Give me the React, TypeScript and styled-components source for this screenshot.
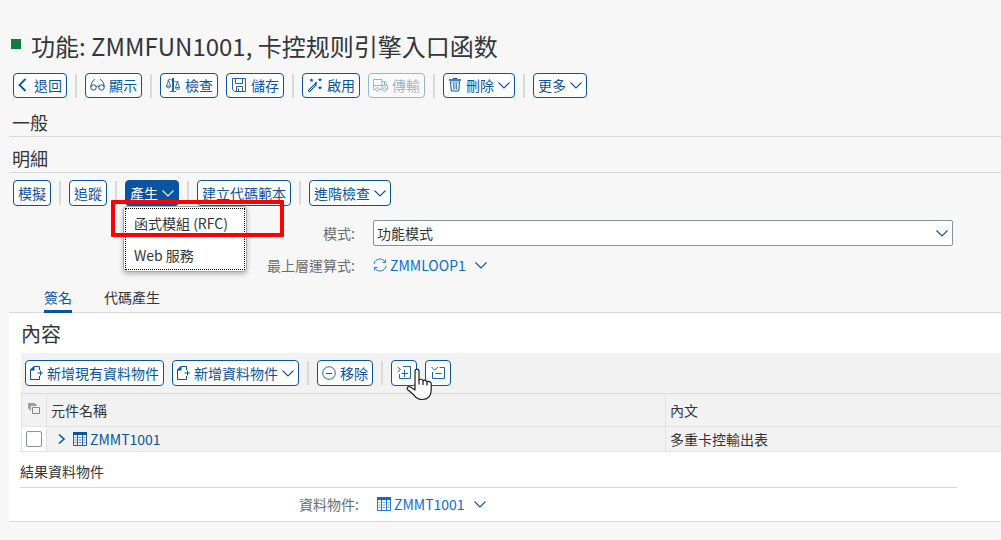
import React from "react";
import styled, { createGlobalStyle, css } from "styled-components";

const BLUE = "#0854a0";
const LINK = "#0a6ed1";
const TEXT = "#32363a";
const LABEL = "#6a6d70";
const LINE = "#d9d9d9";

const GlobalStyle = createGlobalStyle`
  * { box-sizing: border-box; }
  body {
    margin: 0;
    background: #f7f7f7;
    color: ${TEXT};
    font-family: "Noto Sans CJK TC", "Noto Sans CJK SC", sans-serif;
    font-size: 14px;
    line-height: 20px;
  }
  button, select, input { font: inherit; color: inherit; }
`;

const Page = styled.main`
  padding: 30px 0 18px 9px;
`;

const TitleRow = styled.header`
  display: flex;
  align-items: center;
  gap: 10px;
  padding-left: 2px;
  margin-bottom: 11px;
`;

const StatusMark = styled.span`
  width: 10px;
  height: 10px;
  margin-bottom: 4px;
  background: #107e3e;
`;

const Title = styled.h1`
  margin: 0;
  font-size: 24px;
  line-height: 32px;
  font-weight: 400;
`;

const Toolbar = styled.div<{ $shaded?: boolean }>`
  display: flex;
  align-items: center;
  gap: 8px;
  padding: ${(p) => (p.$shaded ? "7px 4px" : "0 4px")};
  background: ${(p) => (p.$shaded ? "#f2f2f2" : "transparent")};
`;

const Separator = styled.span`
  width: 2px;
  height: 24px;
  background: ${LINE};
`;

const Button = styled.button<{ $active?: boolean }>`
  display: inline-flex;
  align-items: center;
  gap: 4px;
  height: 26px;
  padding: 0 4px 1px;
  border: 1px solid ${BLUE};
  border-radius: 4px;
  background: ${(p) => (p.$active ? BLUE : "#fff")};
  color: ${(p) => (p.$active ? "#fff" : BLUE)};
  white-space: nowrap;
  line-height: 22px;
  svg { flex: none; }
  &:disabled { opacity: 0.4; }
`;

const IconButton = styled(Button)`
  width: 26px;
  justify-content: center;
`;

const MainToolbar = styled(Toolbar)`
  ${Button} { height: 25px; }
`;

const SectionTitle = styled.h2<{ $first?: boolean }>`
  margin: ${(p) => (p.$first ? "13px" : "10px")} 0 0;
  padding: 0 0 2px 3px;
  border-bottom: 1px solid ${LINE};
  font-size: 18px;
  line-height: 23px;
  font-weight: 400;
`;

const DetailTools = styled.div`
  margin: 7px 0 14px;
`;

const MenuAnchor = styled.div`
  position: relative;
  display: flex;
`;

const Menu = styled.div`
  position: absolute;
  top: 26px;
  left: -2px;
  z-index: 2;
  width: 124px;
  padding: 1px;
  background: #fff;
  border: 1px solid #a8a8a8;
  border-radius: 4px;
  box-shadow: 0 2px 5px rgba(0, 0, 0, 0.28);
`;

const MenuList = styled.ul`
  display: grid;
  gap: 4px;
  margin: 0;
  padding: 0;
  list-style: none;
  border: 1px dotted #000;
`;

const MenuItem = styled.button`
  display: block;
  width: 100%;
  height: 28px;
  padding: 0 8px;
  border: 0;
  background: none;
  text-align: left;
  white-space: nowrap;
`;

const Highlight = styled.div`
  position: absolute;
  top: 20px;
  left: -14px;
  z-index: 3;
  width: 173px;
  height: 37px;
  border: 4px solid #f00;
  border-radius: 1px;
  pointer-events: none;
`;

const FormRow = styled.div<{ $inset?: boolean }>`
  display: grid;
  grid-template-columns: ${(p) => (p.$inset ? "338px" : "346px")} minmax(0, 1fr);
  column-gap: 18px;
  align-items: center;
  min-height: 26px;
  padding-right: 48px;
`;

const Form = styled.div`
  display: grid;
  gap: 6px;
`;

const labelText = css`
  color: ${LABEL};
  text-align: right;
`;
const Label = styled.label`${labelText}`;
const LabelText = styled.span`${labelText}`;

const SelectWrap = styled.div`
  position: relative;
  display: flex;
  svg {
    position: absolute;
    right: 5px;
    top: 7px;
    pointer-events: none;
    color: ${BLUE};
  }
`;

const Select = styled.select`
  appearance: none;
  width: 100%;
  height: 26px;
  padding: 0 24px 1px 3px;
  border: 1px solid #89919a;
  border-radius: 2px;
  background: #fff;
`;

const ObjectField = styled.div`
  display: flex;
  align-items: center;
  gap: 3px;
  color: ${LINK};
`;

const Link = styled.a`
  display: inline-flex;
  align-items: center;
  gap: 3px;
  color: ${LINK};
  text-decoration: none;
`;

const PlainButton = styled.button`
  display: inline-flex;
  margin-left: 4px;
  padding: 0 2px;
  border: 0;
  background: none;
  color: ${BLUE};
`;

const Tabs = styled.div`
  display: flex;
  gap: 32px;
  margin-top: 6px;
  padding-left: 35px;
  border-bottom: 1px solid ${LINE};
`;

const Tab = styled.button<{ $selected?: boolean }>`
  height: 29px;
  margin-bottom: -1px;
  padding: 0;
  border: 0;
  border-bottom: 3px solid ${(p) => (p.$selected ? BLUE : "transparent")};
  background: none;
  color: ${(p) => (p.$selected ? BLUE : TEXT)};
`;

const Panel = styled.section`
  padding: 7px 0 4px 12px;
  background: #fff;
  border-bottom: 1px solid ${LINE};
`;

const PanelTitle = styled.h3`
  margin: 0 0 5px;
  font-size: 20px;
  line-height: 28px;
  font-weight: 400;
`;

const Table = styled.table`
  width: 100%;
  table-layout: fixed;
  border-collapse: collapse;
  background: #f2f2f2;
  th, td {
    padding: 0 4px;
    border: 1px solid #e2e2e2;
    text-align: left;
    font-weight: 400;
    white-space: nowrap;
  }
  th { height: 33px; border-top-color: ${LINE}; }
  td { height: 25px; }
  th:last-child, td:last-child { border-right: 0; }
`;

const SelectColumn = styled.col`
  width: 25px;
`;

const NameColumn = styled.col`
  width: 63.2%;
`;

const CheckCell = styled.td`
  background: #fff;
`;

const CornerIcon = styled.span`
  display: flex;
  justify-content: center;
  padding-bottom: 2px;
  color: #85888b;
`;

const Checkbox = styled.input`
  appearance: none;
  display: block;
  width: 16px;
  height: 16px;
  margin: 0;
  border: 1px solid #89919a;
  border-radius: 2px;
  background: #fff;
`;

const NameCell = styled.div`
  display: flex;
  align-items: center;
  gap: 3px;
  padding-left: 2px;
  color: ${BLUE};
`;

const RowLink = styled(Link)`
  color: ${BLUE};
`;

const Expander = styled.button`
  display: inline-flex;
  padding: 0 4px;
  border: 0;
  background: none;
  color: ${BLUE};
`;

const ResultTitle = styled.h4`
  margin: 0 44px 3px -1px;
  padding: 7px 0 4px;
  border-bottom: 1px solid ${LINE};
  font-size: 14px;
  line-height: 24px;
  font-weight: 400;
`;

const PointerAnchor = styled.span`
  position: relative;
  display: flex;
`;

const Pointer = styled.svg`
  position: absolute;
  left: 14px;
  top: 8px;
  z-index: 2;
  pointer-events: none;
`;

type IconProps = { w?: number; h?: number; children: React.ReactNode };
const Icon = ({ w = 16, h = 16, children }: IconProps) => (
  <svg width={w} height={h} viewBox={`0 0 ${w} ${h}`} fill="none" stroke="currentColor" strokeWidth="1" aria-hidden="true">
    {children}
  </svg>
);

const Chevron = () => (
  <Icon w={12} h={12}><path d="M0.5 3.5 6 9l5.500-5.500" strokeWidth="1.100" /></Icon>
);
const Back = () => (
  <Icon w={12}><path d="M7.500 2 1.500 8l6 6" strokeWidth="1.800" /></Icon>
);
const Glasses = () => (
  <Icon w={15}>
    <circle cx="3.500" cy="10.500" r="2.700" />
    <circle cx="11.500" cy="10.500" r="2.700" />
    <path d="M6.200 10c.5-1.200 2.100-1.200 2.600 0M.8 10C1 6.500 2.500 3 5 2.600M14.200 10C14 6.500 12.500 3 10 2.600" />
  </Icon>
);
const Scale = () => (
  <Icon>
    <path d="M8 1v13" strokeWidth="1.800" />
    <path d="M5 14.500h6M2.500 3.500c2-1.500 3-1 5.500 0M8 3.500c2 1 3.500 2 5.500 1M3.500 3.500 1.500 9h4zM12.500 4.500l-2 6h4z" strokeWidth=".8" />
    <path d="M1.500 9c0 2.500 4 2.500 4 0M10.500 10.500c0 2.500 4 2.500 4 0" />
  </Icon>
);
const Save = () => (
  <Icon>
    <path d="M1.500 1.500h13v13H3.500l-2-2zM4.500 1.500v5h7v-5M5.500 14.500v-5h6v5M7.500 11.500v3" strokeWidth=".9" />
  </Icon>
);
const Wand = () => (
  <Icon>
    <path d="m1.500 14.500 7.500-7.500" strokeWidth="2.600" />
    <path d="m2 14 6-6" stroke="#fff" strokeWidth=".9" />
    <g fill="currentColor" stroke="none">
      <path d="m4.500 1 .6 1.400 1.600.1-1.200 1 .4 1.600-1.400-.8-1.400.8.4-1.600-1.200-1 1.600-.1z" />
      <path d="m13 .5.6 1.400 1.600.1-1.200 1 .4 1.600-1.400-.8-1.400.8.4-1.600-1.200-1 1.600-.1z" />
      <path d="m13 8.500.6 1.400 1.600.1-1.200 1 .4 1.600-1.400-.8-1.400.8.4-1.600-1.200-1 1.600-.1z" />
      <path d="m9 4.300.4 1 1 .1-.7.8.2 1-.9-.5-.9.5.2-1-.7-.8 1-.1z" />
    </g>
  </Icon>
);
const Truck = () => (
  <Icon w={15}>
    <path d="M2.500 12.500h-2v-10h8.500v10H6.500M9 4.500h3l2.500 4v4h-1M.5 8.500h14M11.500 4.500v4" />
    <circle cx="4.500" cy="12.500" r="1.800" />
    <circle cx="11.500" cy="12.500" r="1.800" />
  </Icon>
);
const Trash = () => (
  <Icon w={14}>
    <path d="M1 3h12" strokeWidth="1.500" />
    <path d="M5 1.500h4m-6.500 3 .8 9.500h7.400l.8-9.500" />
    <path d="M5.500 6v6.500M7 6v6.500M8.500 6v6.500M3 5h8.500" strokeWidth=".7" />
  </Icon>
);
const Refresh = () => (
  <Icon w={14} h={14}>
    <path d="M1 6C1.500 3 4 1 7 1c2.200 0 4 1 5 2.800M13 8c-.5 3-3 5-6 5-2.200 0-4-1-5-2.800M12.500 1.500v3h-3M1.500 12.500v-3h3" strokeWidth=".9" />
  </Icon>
);
const AddDoc = () => (
  <Icon w={13} h={14}>
    <path d="M9.500 4V.5H4L.5 4v9.500h9V10M7.500 7H13M10.500 4.500v5" />
    <path d="M4 .5V4H.5z" fill="currentColor" />
  </Icon>
);
const Minus = () => (
  <Icon w={14} h={14}><circle cx="7" cy="7" r="6.300" strokeWidth=".9" /><path d="M4 7.500h6" /></Icon>
);
const ExpandAll = () => (
  <Icon w={14} h={14}>
    <path d="M6 .5h7.500v12h-11V8M4.500 7.500h6.500M7.500 4v7M.5 1l3 2.500-3 2.500" strokeWidth=".9" />
  </Icon>
);
const CollapseAll = () => (
  <Icon w={14} h={14}>
    <path d="M8.500 1.500h5v11h-12V6M4.500 7.500h6M.5 1l3 3 3.500-3" strokeWidth=".9" />
  </Icon>
);
const TableIcon = () => (
  <Icon w={14} h={14}>
    <path d="M.5.5h13v13H.5zM4.500 3v10.500M9.500 3v10.500" strokeWidth=".9" />
    <path d="M0 1.500h14" strokeWidth="3" />
    <path d="M1.500 5.500h2M1.500 8h2M1.500 10.500h2M5.500 5.500h3M5.500 8h3M5.500 10.500h3M10.500 5.500h2M10.500 8h2M10.500 10.500h2" opacity=".6" />
  </Icon>
);
const Copies = () => (
  <Icon w={12} h={12}>
    <path d="M4.500 4.500h7v6h-7z" />
    <path d="M2.500 7.500v-5H9M.5 5.500v-5H7M1 1.500h7M1.500 1v5.500" opacity=".8" />
  </Icon>
);
const ExpandRow = () => (
  <Icon w={9} h={12}><path d="m2 1.500 5 4.500-5 4.500" strokeWidth="1.600" /></Icon>
);

export default function App() {
  return (
    <>
      <GlobalStyle />
      <Page>
        <TitleRow>
          <StatusMark />
          <Title>功能: ZMMFUN1001, 卡控<span lang="zh-CN">规则</span>引擎入口函数</Title>
        </TitleRow>

        <MainToolbar role="toolbar">
          <Button><Back />退回</Button>
          <Separator />
          <Button><Glasses />顯示</Button>
          <Separator />
          <Button><Scale />檢查</Button>
          <Button><Save />儲存</Button>
          <Separator />
          <Button><Wand />啟用</Button>
          <Button disabled><Truck />傳輸</Button>
          <Separator />
          <Button><Trash />刪除<Chevron /></Button>
          <Separator />
          <Button>更多<Chevron /></Button>
        </MainToolbar>

        <SectionTitle $first>一般</SectionTitle>
        <SectionTitle>明細</SectionTitle>

        <DetailTools>
          <Toolbar role="toolbar">
            <Button>模擬</Button>
            <Separator />
            <Button>追蹤</Button>
            <Separator />
            <MenuAnchor>
              <Button $active aria-expanded="true">產生<Chevron /></Button>
              <Menu>
                <MenuList>
                  <li><MenuItem>函式模組 (RFC)</MenuItem></li>
                  <li><MenuItem>Web 服務</MenuItem></li>
                </MenuList>
              </Menu>
              <Highlight />
            </MenuAnchor>
            <Separator />
            <Button>建立代碼範本</Button>
            <Separator />
            <Button>進階檢查<Chevron /></Button>
          </Toolbar>
        </DetailTools>

        <Form>
          <FormRow>
            <Label htmlFor="mode">模式:</Label>
            <SelectWrap>
              <Select id="mode"><option>功能模式</option></Select>
              <Chevron />
            </SelectWrap>
          </FormRow>
          <FormRow>
            <LabelText>最上層運算式:</LabelText>
            <ObjectField>
              <Link href="#loop"><Refresh />ZMMLOOP1</Link>
              <PlainButton aria-label="運算式選項"><Chevron /></PlainButton>
            </ObjectField>
          </FormRow>
        </Form>

        <Tabs role="tablist">
          <Tab role="tab" aria-selected="true" $selected>簽名</Tab>
          <Tab role="tab" aria-selected="false">代碼產生</Tab>
        </Tabs>

        <Panel>
          <PanelTitle>內容</PanelTitle>
          <Toolbar role="toolbar" $shaded>
            <Button><AddDoc />新增現有資料物件</Button>
            <Button><AddDoc />新增資料物件<Chevron /></Button>
            <Separator />
            <Button><Minus />移除</Button>
            <Separator />
            <PointerAnchor>
              <IconButton aria-label="全部展開"><ExpandAll /></IconButton>
              <Pointer width="28" height="34" viewBox="0 0 28 34" fill="#fff" stroke="#1c1c2b" strokeWidth="1.200" strokeLinejoin="round">
                <path d="M10 18V3.500c0-3.200 4-3.200 4 0V12c.8-1.200 3.800-1 4 .8.900-1 3.600-.7 4 1 1-.8 4.200-.3 4.200 2v6c0 6-3 9.700-9 9.700-4 0-6-1.500-8-4.200L2.500 21.500c-1.200-2 1-3.700 3-2.500L10 22z" />
                <path d="M14 12v4.500M18 12.800v4.200M22 13.800v3.700" fill="none" />
              </Pointer>
            </PointerAnchor>
            <IconButton aria-label="全部摺疊"><CollapseAll /></IconButton>
          </Toolbar>

          <Table>
            <colgroup><SelectColumn /><NameColumn /><col /></colgroup>
            <thead>
              <tr>
                <th><CornerIcon><Copies /></CornerIcon></th>
                <th>元件名稱</th>
                <th>內文</th>
              </tr>
            </thead>
            <tbody>
              <tr>
                <CheckCell><Checkbox type="checkbox" aria-label="選取 ZMMT1001" /></CheckCell>
                <td>
                  <NameCell>
                    <Expander aria-label="展開"><ExpandRow /></Expander>
                    <RowLink href="#row"><TableIcon />ZMMT1001</RowLink>
                  </NameCell>
                </td>
                <td>多重卡控輸出表</td>
              </tr>
            </tbody>
          </Table>

          <ResultTitle>結果資料物件</ResultTitle>
          <FormRow $inset>
            <LabelText>資料物件:</LabelText>
            <ObjectField>
              <Link href="#object"><TableIcon />ZMMT1001</Link>
              <PlainButton aria-label="資料物件選項"><Chevron /></PlainButton>
            </ObjectField>
          </FormRow>
        </Panel>
      </Page>
    </>
  );
}
